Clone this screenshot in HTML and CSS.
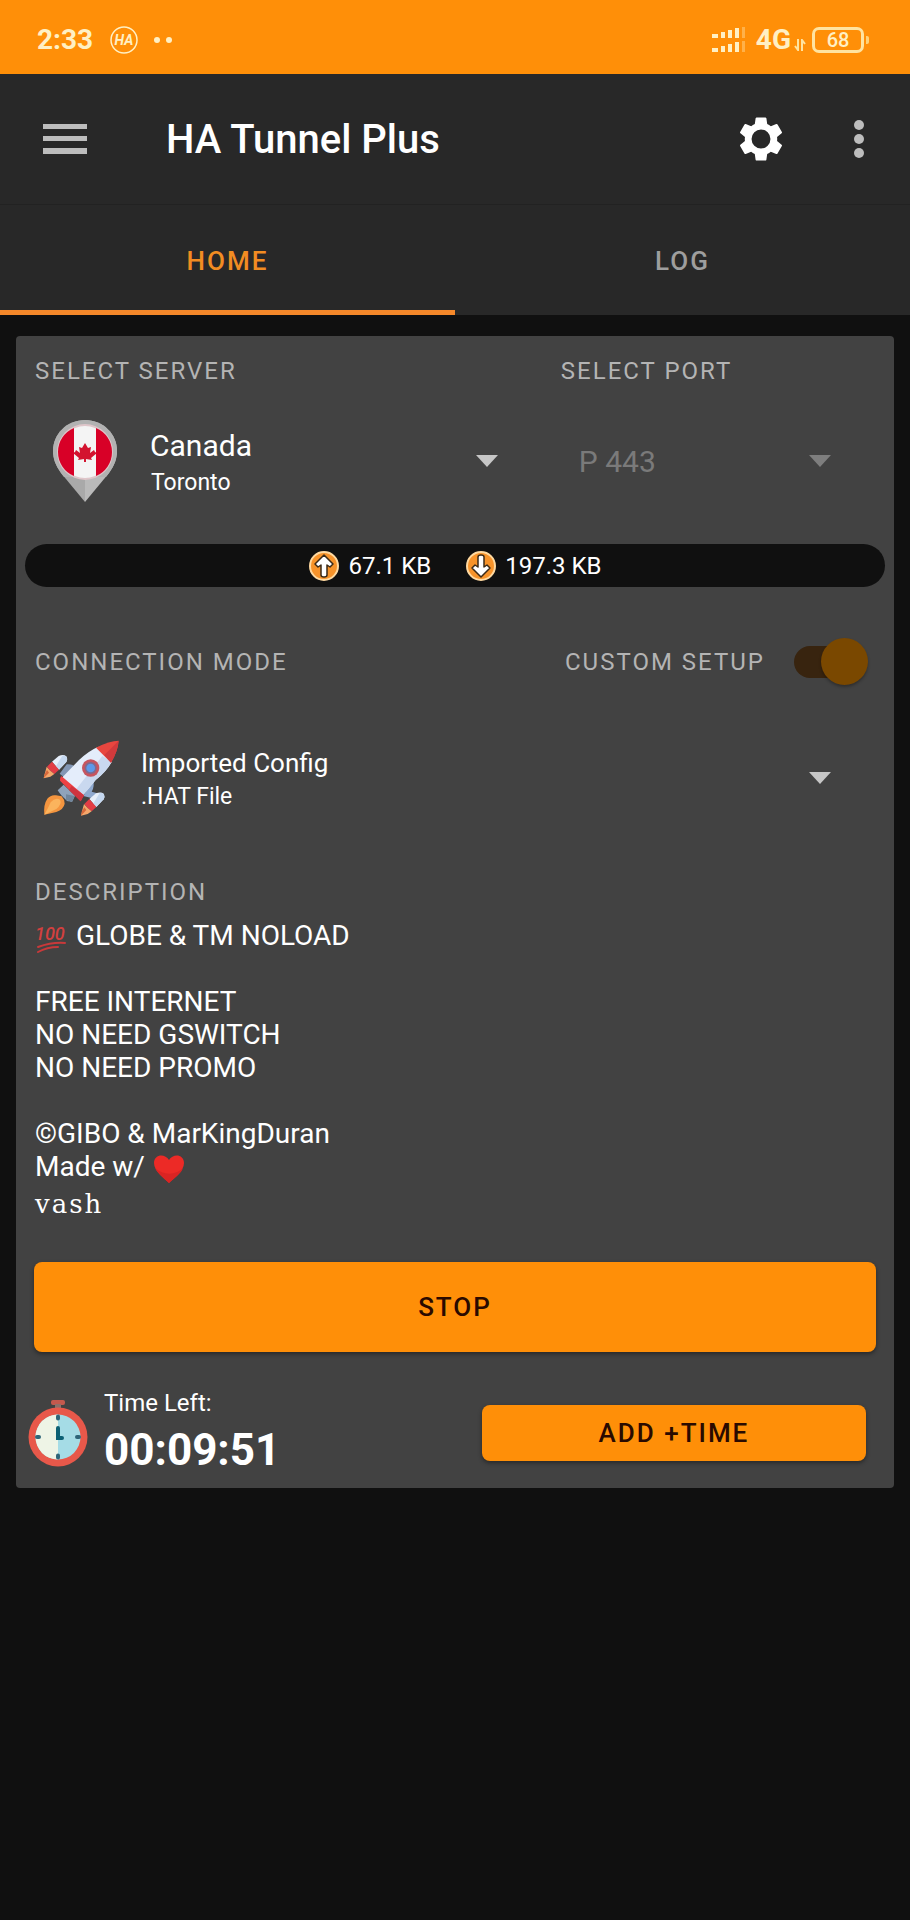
FILE: index.html
```html
<!DOCTYPE html>
<html lang="en">
<head>
  <meta charset="UTF-8">
  <meta name="viewport" content="width=device-width, initial-scale=1.0">
  <title>HA Tunnel Plus</title>
  <link rel="stylesheet" href="styles.css">
</head>
<body>

<!-- Status bar -->
<div class="status-bar">
  <span class="clock">2:33</span>
  <svg class="ha-icon" width="28" height="28" viewBox="0 0 28 28">
    <circle cx="14" cy="14" r="13" fill="none" stroke="#fff0c4" stroke-width="1.5"/>
    <text x="14" y="19" text-anchor="middle" font-size="14" font-weight="700" font-style="italic" fill="#fff0c4">HA</text>
  </svg>
  <svg width="20" height="8" viewBox="0 0 20 8">
    <circle cx="4" cy="4" r="3" fill="#fff0c4"/>
    <circle cx="16" cy="4" r="3" fill="#fff0c4"/>
  </svg>
  <div class="status-right">
    <svg width="36" height="28" viewBox="0 0 36 28" fill="#fff0c4">
      <path d="M1 8h6v4H1zM10 6h4v6h-4zM17 4h4v8h-4zM24 2h4v10h-4zM1 22h6v4H1zM10 20h4v6h-4zM17 18h4v8h-4zM24 16h4v10h-4z"/>
      <path d="M31 1h3v11h-3zM31 15h3v11h-3z" opacity=".35"/>
    </svg>
    <span class="network">4G</span>
    <svg class="data-icon" width="12" height="12" viewBox="0 0 12 12" fill="none" stroke="#ffe3a0" stroke-width="2">
      <path d="M4 0v11L1 7M8 12V1l3 4"/>
    </svg>
    <span class="battery">68</span>
  </div>
</div>

<!-- App bar -->
<header class="app-bar">
  <button class="icon-btn" aria-label="Menu">
    <svg width="44" height="30" viewBox="0 0 44 30" fill="#bdbdbd"><path d="M0 0h44v5H0zM0 12h44v5H0zM0 24h44v6H0z"/></svg>
  </button>
  <h1>HA Tunnel Plus</h1>
  <button class="icon-btn" aria-label="Settings">
    <svg width="54" height="54" viewBox="0 0 24 24" fill="#fff"><path d="M19.14 12.94c.04-.3.06-.61.06-.94 0-.32-.02-.64-.07-.94l2.03-1.58c.18-.14.23-.41.12-.61l-1.92-3.32c-.12-.22-.37-.29-.59-.22l-2.39.96c-.5-.38-1.03-.7-1.62-.94L14.4 2.81c-.04-.24-.24-.41-.48-.41h-3.84c-.24 0-.43.17-.47.41L9.25 5.35c-.59.24-1.13.57-1.62.94l-2.39-.96c-.22-.08-.47 0-.59.22L2.74 8.87c-.12.21-.08.47.12.61l2.03 1.58c-.05.3-.09.63-.09.94s.02.64.07.94l-2.03 1.58c-.18.14-.23.41-.12.61l1.92 3.32c.12.22.37.29.59.22l2.39-.96c.5.38 1.03.7 1.62.94l.36 2.54c.05.24.24.41.48.41h3.84c.24 0 .44-.17.47-.41l.36-2.54c.59-.24 1.13-.56 1.62-.94l2.39.96c.22.08.47 0 .59-.22l1.92-3.32c.12-.22.07-.47-.12-.61l-2.01-1.58zM12 16.2a4.2 4.2 0 1 1 0-8.4 4.2 4.2 0 0 1 0 8.4z"/></svg>
  </button>
  <button class="icon-btn more" aria-label="More options">
    <svg width="10" height="38" viewBox="0 0 10 38" fill="#bdbdbd"><circle cx="5" cy="5" r="5"/><circle cx="5" cy="19" r="5"/><circle cx="5" cy="33" r="5"/></svg>
  </button>
</header>

<nav class="tabs">
  <button class="tab active">HOME</button>
  <button class="tab">LOG</button>
</nav>

<main class="card">

  <!-- Server and port -->
  <div class="server-row">
    <div>
      <label class="label" for="server">SELECT SERVER</label>
      <div class="dropdown server">
        <select id="server"><option>Canada</option></select>
        <svg class="dropdown-icon" width="66" height="84" viewBox="0 0 66 84">
          <path d="M33 1C15 1 1 15 1 32c0 8 3 15 8 22l24 29z" fill="#a9a9a9"/>
          <path d="M33 1c18 0 32 14 32 31 0 8-3 15-8 22L33 83z" fill="#bababa"/>
          <path d="M33 1C15 1 1 15 1 32c0 8 3 15 8 22l3 4h42l3-4c5-7 8-14 8-22C65 15 51 1 33 1z" fill="#b2b2b2"/>
          <circle cx="33" cy="33" r="28" fill="#dfc6ca"/>
          <circle cx="33" cy="33" r="26" fill="#f4f4f4"/>
          <path d="M22 9a26 26 0 0 0 0 48zM44 9a26 26 0 0 1 0 48z" fill="#d80027"/>
          <path d="M33 24l3 5 3-1-1 6 4-3 1 2 2 1-6 5 1 2-6-1v3h-2v-3l-6 1 1-2-6-5 2-1 1-2 4 3-1-6 3 1z" fill="#d3132f"/>
        </svg>
        <span class="dropdown-sub">Toronto</span>
      </div>
    </div>
    <div>
      <label class="label" for="port">SELECT PORT</label>
      <div class="dropdown port disabled">
        <select id="port" disabled><option>P 443</option></select>
      </div>
    </div>
  </div>

  <!-- Traffic -->
  <div class="traffic">
    <span class="traffic-item">
      <svg width="32" height="32" viewBox="0 0 32 32">
        <circle cx="16" cy="16" r="14" fill="#f7932a" stroke="#ffd9a0" stroke-width="2"/>
        <path d="M16 5l9 9-3 3-3-2v10q0 2-3 2t-3-2V15l-3 2-3-3z" fill="#fff" stroke="#3a2a18" stroke-width="1.5" stroke-linejoin="round"/>
      </svg>
      67.1 KB
    </span>
    <span class="traffic-item">
      <svg width="32" height="32" viewBox="0 0 32 32">
        <circle cx="16" cy="16" r="14" fill="#f7932a" stroke="#ffd9a0" stroke-width="2"/>
        <path d="M16 27l-9-9 3-3 3 2V7q0-2 3-2t3 2v10l3-2 3 3z" fill="#fff" stroke="#3a2a18" stroke-width="1.5" stroke-linejoin="round"/>
      </svg>
      197.3 KB
    </span>
  </div>

  <!-- Connection mode -->
  <div class="mode-row">
    <label class="label" for="mode">CONNECTION MODE</label>
    <label class="label setup" for="custom">CUSTOM SETUP</label>
    <input type="checkbox" class="switch" id="custom" checked disabled>
  </div>
  <div class="dropdown mode">
    <select id="mode"><option>Imported Config</option></select>
    <svg class="dropdown-icon" width="80" height="76" viewBox="30 42 240 228">
      <path d="M83 193l18-17 34 33-9 19c-8-3-13 0-18-6s-12-9-25-29z" fill="#8fa3bb"/>
      <path d="M108 205l26 5-8 18-18-6z" fill="#71869c"/>
      <path d="M110 115q20-1 25 9l-27 34-19-15z" fill="#8397b5"/>
      <path d="M190 160q4 25-5 37l17 5-15 15-27-7z" fill="#8fa9cf"/>
      <path d="M205 62q-30 13-58 40L95 156l60 57 42-51q33-26 48-54z" fill="#e4edfb"/>
      <path d="M245 108q-18 31-48 54l-42 51-20-19 82-104z" fill="#c9d8ef"/>
      <path d="M266 44q-27 0-68 21l45 45q21-36 23-66z" fill="#e8463f"/>
      <path d="M266 44l-43 43 20 23q21-36 23-66z" fill="#d13a3c"/>
      <path d="M94 150l68 58-10 18-62-62q-2-7 4-14z" fill="#ee4143"/>
      <path d="M125 180l37 28-10 18-35-34z" fill="#cf3440"/>
      <circle cx="182" cy="126" r="26" fill="#c65560"/>
      <circle cx="182" cy="126" r="18" fill="#7c6a91"/>
      <circle cx="182" cy="126" r="13" fill="#5c99ea"/>
      <g id="booster">
        <path d="M66 107l20-17q14-6 23 1 5 8 0 17l-22 23z" fill="#e6effb"/>
        <path d="M97 89q8-2 13 4 3 8-1 15l-22 23-10-9z" fill="#c5d8f0"/>
        <path d="M66 107l21 24-14 13-12-10-10-12z" fill="#e23c45"/>
        <path d="M50 122l11 12 12 10-12 8-20 5 3-13z" fill="#f5a76b"/>
        <path d="M41 157l16-17-6-8-7 12z" fill="#d8693b"/>
      </g>
      <use href="#booster" x="112" y="112"/>
      <path d="M43 266q-3-31 9-48 11-13 26-10l17 3q9 10 9 22-3 17-25 25z" fill="#f4953f"/>
      <path d="M43 266q13-22 19-37 14-17 28-8 7 12-11 28z" fill="#fbb45d"/>
    </svg>
    <span class="dropdown-sub">.HAT File</span>
  </div>

  <!-- Description -->
  <h2 class="label desc-label">DESCRIPTION</h2>
  <div class="description">
    <p><svg class="emoji" role="img" aria-label="100" width="34" height="32" viewBox="0 0 34 32">
      <text x="0" y="18" font-size="18" font-style="italic" font-weight="500" fill="#d2403f">100</text>
      <path d="M3 25q14-5 27-4M3 30q9-5 20-5" fill="none" stroke="#c8393a" stroke-width="2" stroke-linecap="round"/>
    </svg> GLOBE &amp; TM NOLOAD</p>
    <br>
    <p>FREE INTERNET<br>NO NEED GSWITCH<br>NO NEED PROMO</p>
    <br>
    <p>©GIBO &amp; MarKingDuran<br>Made w/ <svg class="emoji" role="img" aria-label="heart" width="34" height="32" viewBox="0 0 34 32">
      <path d="M17 30C12 25 2 18 2 10 2 1 13 0 17 7c4-7 15-6 15 3 0 8-10 15-15 20z" fill="#ec2a26"/>
      <path d="M17 30C12 25 6 21 3 15c8 7 20 8 28 0-2 6-9 10-14 15z" fill="#da2423"/>
    </svg></p>
    <p class="signature">vash</p>
  </div>

  <button class="btn stop">STOP</button>

  <!-- Timer -->
  <div class="timer-row">
    <div class="timer">
      <svg width="60" height="68" viewBox="0 0 60 68">
        <rect x="23" y="1" width="14" height="5" rx="2" fill="#c4594d"/>
        <path d="M27 5h6v5h-6z" fill="#8e7069"/>
        <circle cx="30" cy="38" r="29.5" fill="#e8584a"/>
        <circle cx="30" cy="38" r="22.5" fill="#a5dce6"/>
        <path d="M30 15.500a22.500 22.500 0 0 0 0 45z" fill="#eef4e6"/>
        <path d="M30 17.500v2M30 56.500v2M9 38h2M49 38h2" stroke="#2e6579" stroke-width="4" stroke-linecap="round"/>
        <path d="M30 29v10h4" fill="none" stroke="#0c6074" stroke-width="4" stroke-linecap="round"/>
      </svg>
      <div>
        <p class="time-label">Time Left:</p>
        <p class="time">00:09:51</p>
      </div>
    </div>
    <button class="btn">ADD +TIME</button>
  </div>
</main>

</body>
</html>
```
FILE: styles.css
```css
* { box-sizing: border-box; }
body {
  margin: 0;
  min-height: 100vh;
  background: #101010;
  color: #fff;
  font-family: Roboto, "Liberation Sans", sans-serif;
  font-size: 24px;
}
h1, h2, p { margin: 0; font-weight: 400; }
svg { flex-shrink: 0; }
button, select { font-family: inherit; color: inherit; border: 0; background: none; }

/* Status bar */
.status-bar {
  display: flex;
  align-items: center;
  height: 74px;
  padding: 5px 46px 0 37px;
  background: #ff8f08;
  color: #fff0c4;
}
.clock, .network { font-size: 28px; font-weight: 700; }
.clock { padding-bottom: 0; }
.ha-icon { margin: 0 15px 0 17px; }
.status-right { margin-left: auto; display: flex; align-items: center; }
.network { margin: 0 3px 0 9px; }
.data-icon { margin: 10px 6px 0 0; }
.battery {
  position: relative;
  width: 52px;
  height: 26px;
  border: 3px solid #ffe3a0;
  border-radius: 7px;
  font-size: 20px;
  font-weight: 500;
  line-height: 20px;
  text-align: center;
}
.battery::after {
  content: "";
  position: absolute;
  right: -8px;
  top: 6px;
  width: 3px;
  height: 8px;
  border-radius: 0 2px 2px 0;
  background: #ffd27a;
}

/* App bar */
.app-bar {
  display: flex;
  align-items: center;
  height: 131px;
  padding: 0 46px 0 43px;
  background: #282828;
  border-bottom: 1px solid #222;
}
.app-bar h1 { flex: 1; padding-left: 79px; font-size: 40px; font-weight: 500; }
.icon-btn { display: flex; padding: 0; }
.more { margin-left: 66px; }

/* Tabs */
.tabs { display: flex; background: #282828; }
.tab {
  flex: 1;
  height: 110px;
  padding: 7px 0 0;
  border-bottom: 5px solid transparent;
  color: #9e9e9e;
  font-size: 26px;
  font-weight: 500;
  letter-spacing: 2px;
}
.tab.active { color: #f28c22; border-bottom-color: #f5882a; }

/* Card */
.card {
  margin: 21px 16px;
  padding: 20px 0 10px;
  border-radius: 4px;
  background: #424242;
}
.label {
  display: block;
  color: #b4b4b4;
  font-size: 24px;
  line-height: 30px;
  letter-spacing: 2px;
}
.server-row {
  display: grid;
  grid-template-columns: 21fr 13fr;
  gap: 20px;
  padding: 0 20px 0 19px;
}

/* Dropdowns */
.dropdown { display: grid; align-items: center; height: 116px; margin-top: 17px; }
.dropdown > *, .dropdown::after { grid-area: 1 / 1; }
.dropdown select { width: 100%; height: 100%; appearance: none; opacity: 1; }
.dropdown-icon, .dropdown-sub, .dropdown::after { pointer-events: none; }
.dropdown-sub { font-size: 23px; }
.dropdown::after {
  content: "";
  justify-self: end;
  margin-right: 43px;
  border: 11px solid transparent;
  border-top: 12px solid #c6c6c6;
  border-bottom: 0;
}
.server .dropdown-icon { margin-left: 17px; }
.server select { padding: 0 80px 32px 115px; font-size: 30px; }
.server .dropdown-sub { padding: 42px 0 0 116px; }
.port select { padding: 0 80px 0 18px; font-size: 30px; color: #7a7a7a; }
.disabled::after { border-top-color: #7e7e7e; }

/* Traffic bar */
.traffic {
  display: flex;
  justify-content: center;
  align-items: center;
  gap: 34px;
  height: 43px;
  margin: 25px 9px 0;
  border-radius: 22px;
  background: #101010;
}
.traffic-item { display: flex; align-items: center; gap: 8px; }

/* Connection mode */
.mode-row { display: flex; align-items: center; margin-top: 51px; padding: 0 26px 0 19px; }
.setup { margin-left: auto; }
.switch {
  appearance: none;
  position: relative;
  width: 74px;
  height: 48px;
  margin: 0 0 0 29px;
}
.switch::before {
  content: "";
  position: absolute;
  inset: 8px 10px 8px 0;
  border-radius: 16px;
  background: #38240f;
}
.switch::after {
  content: "";
  position: absolute;
  right: 0;
  top: 0;
  width: 47px;
  height: 47px;
  border-radius: 50%;
  background: #7a4800;
  box-shadow: 0 2px 3px rgba(0, 0, 0, 0.3);
}
.mode { margin: 34px 20px 0; }
.mode .dropdown-icon { margin-left: 4px; }
.mode select { padding: 0 80px 30px 105px; font-size: 26px; }
.mode .dropdown-sub { padding: 36px 0 0 105px; }

/* Description */
.desc-label { margin: 41px 19px 0; }
.description { margin: 12px 19px 0; font-size: 28px; line-height: 33px; }
.emoji { vertical-align: -5px; margin: -4px 0; }
.signature {
  font-family: "DejaVu Serif", serif;
  font-size: 26px;
  line-height: 42px;
  letter-spacing: 2px;
}

/* Buttons */
.btn {
  height: 56px;
  border-radius: 8px;
  background: #ff8f08;
  color: #2a0a00;
  font-size: 26px;
  font-weight: 500;
  letter-spacing: 2px;
  box-shadow: 0 2px 4px rgba(0, 0, 0, 0.4);
}
.stop { display: block; width: calc(100% - 36px); height: 90px; margin: 37px 18px 36px; }

/* Timer */
.timer-row {
  display: grid;
  grid-template-columns: 13fr 11fr;
  align-items: center;
  padding: 0 28px 0 12px;
}
.timer { display: flex; align-items: center; gap: 16px; }
.time-label { margin-bottom: 4px; line-height: 30px; }
.time { font-size: 44px; font-weight: 700; line-height: 56px; }
```
